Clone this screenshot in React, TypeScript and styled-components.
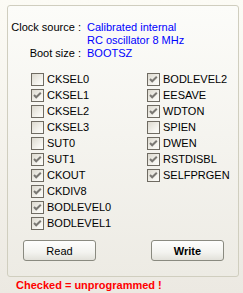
import React from 'react';
import styled, {createGlobalStyle} from 'styled-components';

const GlobalStyle = createGlobalStyle`
  html, body {
    margin: 0;
    padding: 0;
  }
  body {
    font-family: "Liberation Sans", Arial, sans-serif;
    font-size: 11px;
  }
`

const Window = styled.div`
  width: 243px;
  height: 293px;
  overflow: hidden;
  background: linear-gradient(#fcfbf5, #ece9e2);
  padding: 5px 0 0 7px;
  box-sizing: border-box;
`
const Panel = styled.div`
  width: 232px;
  height: 272px;
  box-sizing: border-box;
  border: 1px solid #d0cebf;
  border-radius: 3px;
  background: linear-gradient(#fcfcf9, #edebe4);
  padding: 15px 0 0 0;
  display: flex;
  flex-direction: column;
`
const Info = styled.div`
  display: grid;
  grid-template-columns: 73px auto;
  column-gap: 6px;
  line-height: 13px;
  white-space: nowrap;
`
const InfoLabel = styled.span`
  text-align: right;
  color: #000;
`
const InfoValue = styled.span`
  color: #0000ff;
`
const Fuses = styled.div`
  display: grid;
  grid-template-columns: 116px auto;
  grid-auto-flow: column;
  grid-template-rows: repeat(10, 16px);
  margin: 11px 0 0 23px;
`
const Fuse = styled.label`
  display: flex;
  align-items: center;
  gap: 3px;
  color: #000;
`
const Box = styled.span`
  width: 13px;
  height: 13px;
  box-sizing: border-box;
  border: 1px solid #6f6b62;
  background: linear-gradient(135deg, #dcd9cf, #f6f5f0 70%, #fbfbf8);
  display: flex;
  align-items: center;
  justify-content: center;
`
const Buttons = styled.div`
  display: flex;
  justify-content: space-between;
  margin: 9px 0 0 15px;
  width: 201px;
`
const Button = styled.button<{$bold?: boolean}>`
  width: 73px;
  height: 21px;
  padding: 0;
  border: 1px solid #8a8a80;
  border-radius: 3px;
  background: linear-gradient(#fefefd, #f3f3ef 60%, #e2e1da);
  font-family: "Liberation Sans", Arial, sans-serif;
  font-size: 11px;
  font-weight: ${p => p.$bold ? 'bold' : 'normal'};
  color: #000;
`
const Note = styled.div`
  margin: 1px 0 0 9px;
  font-weight: bold;
  color: #ff0000;
  line-height: 14px;
`

const left: [string, boolean][] = [
  ['CKSEL0', false], ['CKSEL1', true], ['CKSEL2', false], ['CKSEL3', false],
  ['SUT0', false], ['SUT1', true], ['CKOUT', true], ['CKDIV8', true],
  ['BODLEVEL0', true], ['BODLEVEL1', true],
]
const right: [string, boolean][] = [
  ['BODLEVEL2', true], ['EESAVE', true], ['WDTON', true], ['SPIEN', false],
  ['DWEN', true], ['RSTDISBL', true], ['SELFPRGEN', true],
]

function Check({on}: {on: boolean}) {
  return (
    <Box>
      {on && (
        <svg width="11" height="11" viewBox="0 0 11 11">
          <path d="M2 5 L4.2 7.3 L8.8 2.7" fill="none" stroke="#7a7873" strokeWidth="2"/>
        </svg>
      )}
    </Box>
  )
}

function App() {
  return (
    <Window>
      <GlobalStyle/>
      <Panel>
        <Info>
          <InfoLabel>Clock source :</InfoLabel>
          <InfoValue>Calibrated internal</InfoValue>
          <span/>
          <InfoValue>RC oscillator 8 MHz</InfoValue>
          <InfoLabel>Boot size :</InfoLabel>
          <InfoValue>BOOTSZ</InfoValue>
        </Info>
        <Fuses>
          {left.map(([name, on]) =>
            <Fuse key={name}><Check on={on}/>{name}</Fuse>)}
          {right.map(([name, on]) =>
            <Fuse key={name}><Check on={on}/>{name}</Fuse>)}
        </Fuses>
        <Buttons>
          <Button>Read</Button>
          <Button $bold>Write</Button>
        </Buttons>
      </Panel>
      <Note>Checked = unprogrammed !</Note>
    </Window>
  );
}
export default App
